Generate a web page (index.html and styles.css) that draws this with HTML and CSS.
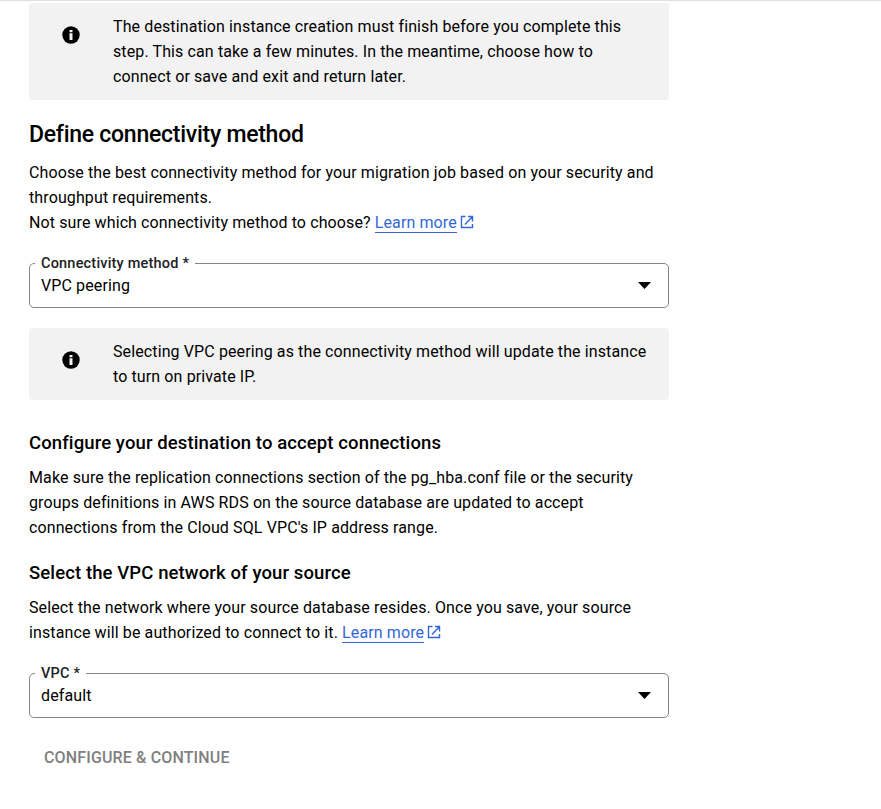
FILE: index.html
```html
<!DOCTYPE html>
<html lang="en">
<head>
<meta charset="utf-8">
<title>Define connectivity method</title>
<link rel="stylesheet" href="styles.css">
</head>
<body>
<main class="page">
  <div class="notice">
    <svg class="info" viewBox="0 0 18 18"><circle cx="9" cy="9" r="8.7"/><path d="M7.5 4h3v2.2h-3zM7.5 7.3h3v6.7h-3z" fill="#f2f2f2"/></svg>
    <p>The destination instance creation must finish before you complete this<br>step. This can take a few minutes. In the meantime, choose how to<br>connect or save and exit and return later.</p>
  </div>
  <h1>Define connectivity method</h1>
  <p>Choose the best connectivity method for your migration job based on your security and<br>throughput requirements.<br>Not sure which connectivity method to choose? <a href="#"><span>Learn more</span><svg class="ext" viewBox="0 0 14 14"><path d="M5.5 1.5h-4v11h11V9M8 1.5h4.5v5M12.5 1.5l-7.5 8"/></svg></a></p>
  <fieldset class="select">
    <legend>Connectivity method *</legend>
    <div class="value">VPC peering<svg class="arrow" viewBox="0 0 13 7"><path d="M0 0h13L6.5 7z"/></svg></div>
  </fieldset>
  <div class="notice short">
    <svg class="info" viewBox="0 0 18 18"><circle cx="9" cy="9" r="8.7"/><path d="M7.5 4h3v2.2h-3zM7.5 7.3h3v6.7h-3z" fill="#f2f2f2"/></svg>
    <p>Selecting VPC peering as the connectivity method will update the instance<br>to turn on private IP.</p>
  </div>
  <h2 class="configure">Configure your destination to accept connections</h2>
  <p>Make sure the replication connections section of the pg_hba.conf file or the security<br>groups definitions in AWS RDS on the source database are updated to accept<br>connections from the Cloud SQL VPC's IP address range.</p>
  <h2>Select the VPC network of your source</h2>
  <p>Select the network where your source database resides. Once you save, your source<br>instance will be authorized to connect to it. <a href="#"><span>Learn more</span><svg class="ext" viewBox="0 0 14 14"><path d="M5.5 1.5h-4v11h11V9M8 1.5h4.5v5M12.5 1.5l-7.5 8"/></svg></a></p>
  <fieldset class="select">
    <legend>VPC *</legend>
    <div class="value">default<svg class="arrow" viewBox="0 0 13 7"><path d="M0 0h13L6.5 7z"/></svg></div>
  </fieldset>
  <button>CONFIGURE &amp; CONTINUE</button>
</main>
</body>
</html>
```

FILE: styles.css
```css
* { box-sizing: border-box; }
body { margin: 0; height: 809px; overflow: hidden; background: #fff; border-top: 1px solid #e0e0e0; font: 16px/25px Roboto, sans-serif; letter-spacing: 0.113px; color: #000; }
.page { width: 640px; margin: 2px 0 0 29px; white-space: nowrap; }
p { margin: 0; }
.notice { display: flex; height: 97px; padding: 11px 0 0 33px; background: #f2f2f2; border-radius: 4px; }
.info { width: 18px; height: 18px; margin: 12px 33px 0 0; flex: none; }
.short { height: 72px; margin-top: 20px; }
h1 { margin: 19px 0 9px; font-size: 23px; line-height: 32px; font-weight: 500; letter-spacing: -0.26px; }
h2 { margin: 21px 0 9px; font-size: 18.5px; line-height: 25px; font-weight: 500; letter-spacing: 0.11px; }
.configure { margin-top: 31px; }
a { color: #3367d6; text-decoration: none; }
a span { border-bottom: 1px solid #3367d6; }
.ext { width: 14px; height: 14px; margin-left: 3px; vertical-align: -1px; fill: none; stroke: #3367d6; stroke-width: 1.4; }
.select { min-width: 0; height: 54px; margin: 19px 0 0; padding: 0 17px 0 11px; border: 1px solid #80868b; border-radius: 5px; }
.select legend { height: 18px; margin-left: -6px; padding: 0 6px; font-size: 14.5px; line-height: 20px; font-weight: 500; letter-spacing: 0.2px; color: #202124; }
.value { display: flex; justify-content: space-between; align-items: center; height: 27px; }
.arrow { width: 13px; height: 7px; }
button { display: block; margin: 27px 0 0 15px; padding: 0; border: 0; background: none; font: 500 16px/25px Roboto, sans-serif; letter-spacing: 0.15px; color: #808080; }
```
